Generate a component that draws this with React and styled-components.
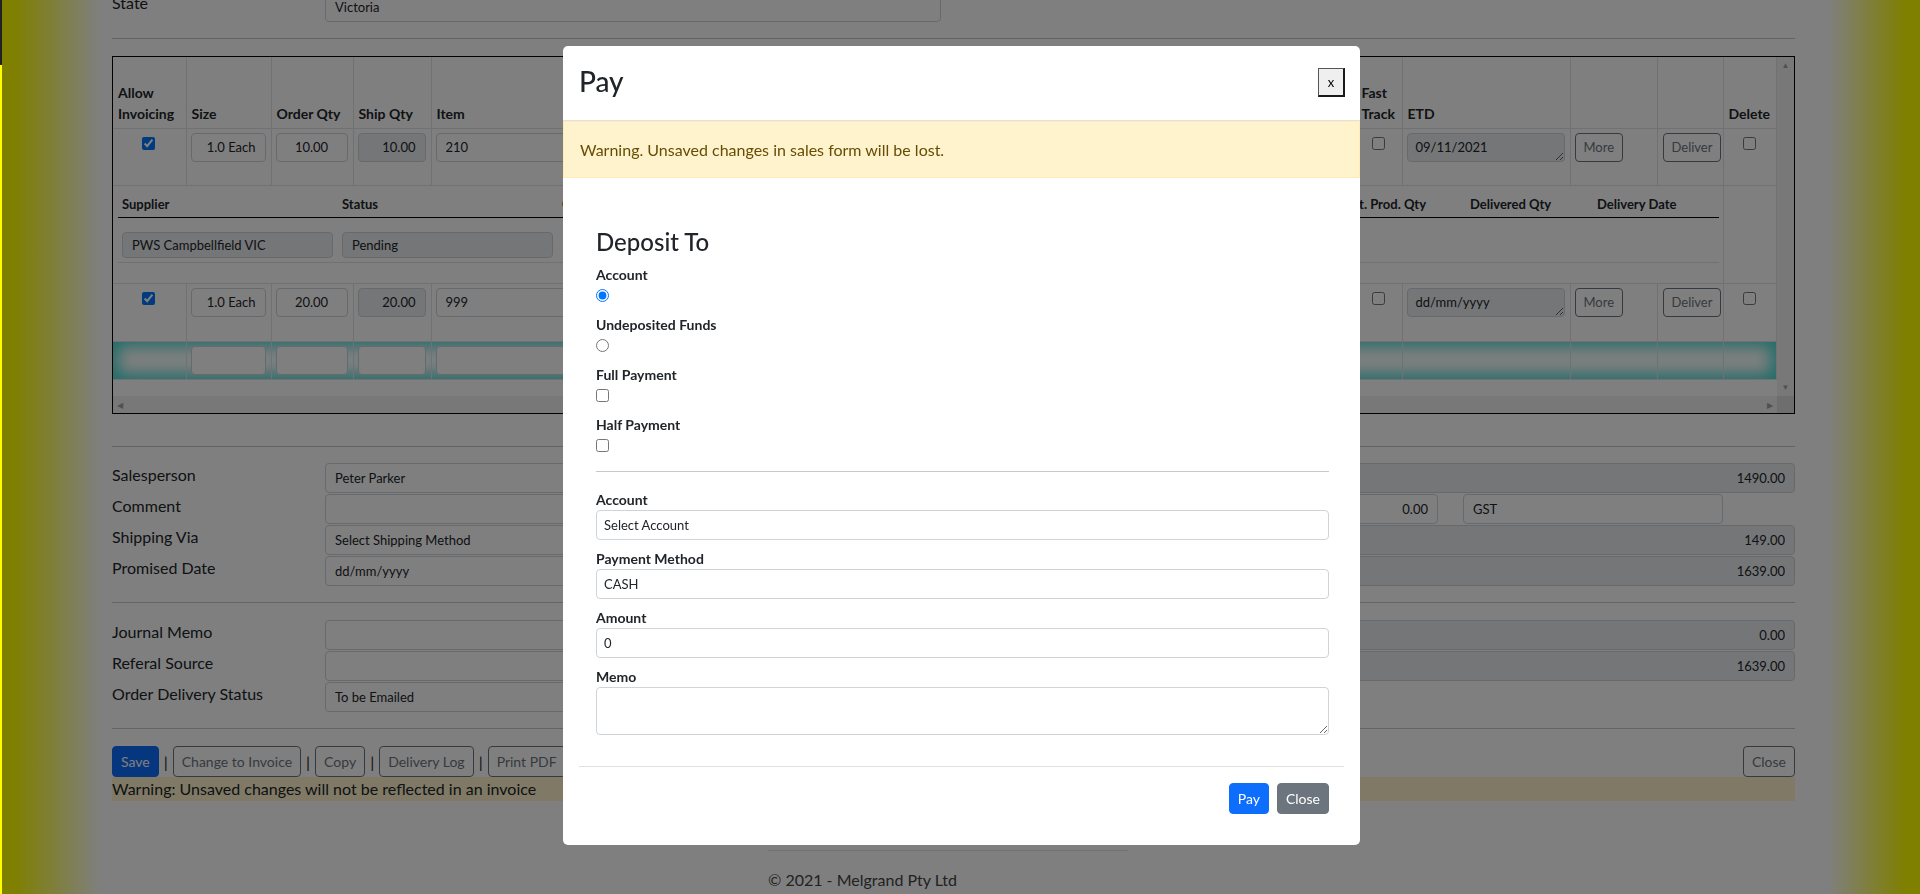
import React from 'react';
import styled, { createGlobalStyle } from 'styled-components';

const GlobalStyle = createGlobalStyle`
    html, body {
        margin: 0;
        height: 100%;
        overflow: hidden;
    }
    body {
        font-family: Lato, 'Liberation Sans', sans-serif;
        font-size: 16px;
        color: #212529;
        background: linear-gradient(90deg, #ffff00 0, #ffff00 14px, #fff 100px, #fff calc(100% - 92px), #ffff00 calc(100% - 14px), #ffff00 100%);
    }
    *, *::before, *::after {
        box-sizing: border-box;
    }
`;

const Page = styled.div`
    margin: 0 125px 0 112px;
`;

const TopRow = styled.div`
    display: grid;
    grid-template-columns: 829px 1fr;
    column-gap: 239px;
    align-items: start;
    margin-top: -9px;
`;

const FieldRow = styled.div`
    display: grid;
    grid-template-columns: ${p => p.$label || 213}px 1fr;
    align-items: center;
    height: ${p => p.$h || 30}px;
`;

const FieldLabel = styled.label`
    font-size: 16px;
    line-height: 24px;
    align-self: start;
`;

const Control = styled.input`
    display: block;
    width: 100%;
    height: ${p => p.$h || 30}px;
    margin-top: ${p => p.$shift || 0}px;
    padding: 0 9px;
    font: 13px Lato, 'Liberation Sans', sans-serif;
    color: #212529;
    text-align: ${p => p.$align || 'left'};
    background: ${p => (p.readOnly ? '#e9ecef' : '#fff')};
    border: 1px solid #ced4da;
    border-radius: 4px;
    outline: none;
`;

const Rule = styled.hr`
    border: 0;
    border-top: 1px solid rgba(33, 37, 41, 0.25);
    margin: ${p => p.$m};
`;

/* ---------- lines table ---------- */

const TableBox = styled.div`
    margin-top: 17px;
    border: 1px solid #000;
    display: grid;
    grid-template-columns: 1fr 17px;
    grid-template-rows: 339px 17px;
`;

const TableViewport = styled.div`
    overflow: hidden;
    background: #fff;
`;

const Lines = styled.table`
    border-collapse: collapse;
    table-layout: fixed;
    width: 1663px;
`;

const Row = styled.tr`
    height: ${p => p.$h}px;
    ${p => p.$glow && 'box-shadow: inset 0 0 16px 5px #3fd9d0;'}
`;

const Th = styled.th`
    border: 1px solid #dee2e6;
    border-top: 0;
    &:first-child { border-left: 0; }
    vertical-align: bottom;
    text-align: left;
    padding: 0 4px 4px 5px;
    font-size: 14px;
    font-weight: 700;
    line-height: 21px;
    white-space: nowrap;
`;

const Td = styled.td`
    border: 1px solid #dee2e6;
    &:first-child { border-left: 0; }
    vertical-align: top;
    text-align: ${p => p.$align || 'left'};
    padding: ${p => p.$pad || '4px 5px 4px 4px'};
`;

const Check = styled.input`
    width: 13px;
    height: 13px;
    margin: 4px 0 0;
`;

const DateBox = styled.textarea`
    display: block;
    width: 100%;
    height: 29px;
    padding: 4px 8px;
    font: 13px/19px Lato, 'Liberation Sans', sans-serif;
    color: #212529;
    background: #e9ecef;
    border: 1px solid #ced4da;
    border-radius: 4px;
    overflow: hidden;
    outline: none;
`;

const GhostButton = styled.button`
    height: ${p => p.$h || 29}px;
    padding: 0 8px;
    font: ${p => p.$size || 13}px Lato, 'Liberation Sans', sans-serif;
    color: #6c757d;
    background: transparent;
    border: 1px solid #6c757d;
    border-radius: 4px;
`;

const SubGrid = styled.div`
    display: grid;
    grid-template-columns: 220px 220px 388px 396px 124px 127px 126px;
`;

const SubHead = styled.div`
    padding: 0 4px 3px;
    font-size: 13px;
    font-weight: 700;
    line-height: 20px;
    white-space: nowrap;
    border-bottom: 1px solid #000;
`;

const SubCell = styled.div`
    padding: 14px 5px 4px 4px;
    border-bottom: 1px solid #dee2e6;
`;

const VScroll = styled.div`
    background: #f1f1f1;
    display: flex;
    flex-direction: column;
    justify-content: space-between;
    align-items: center;
    padding: 3px 0 4px;
`;

const HScroll = styled.div`
    background: #f1f1f1;
    display: flex;
    justify-content: space-between;
    align-items: center;
    padding: 0 4px;
`;

const Corner = styled.div`
    background: #dcdcdc;
`;

const Arrow = styled.span`
    font-size: 8px;
    line-height: 10px;
    color: #a3a3a3;
`;

/* ---------- summary ---------- */

const SummaryGrid = styled.div`
    display: grid;
    grid-template-columns: 829px 830px;
    column-gap: 24px;
`;

const Stack = styled.div`
    display: flex;
    flex-direction: column;
    gap: 1px;
`;

const Pair = styled.div`
    display: grid;
    grid-template-columns: 258px 260px;
    column-gap: 25px;
`;

const ActionBar = styled.div`
    display: flex;
    justify-content: space-between;
    align-items: center;
`;

const ButtonGroup = styled.div`
    display: flex;
    align-items: center;
    gap: 5px;
`;

const Pipe = styled.span`
    font-size: 16px;
    line-height: 24px;
`;

const SaveButton = styled.button`
    height: 31px;
    padding: 0 8px;
    font: 14px Lato, 'Liberation Sans', sans-serif;
    color: #fff;
    background: #0d6efd;
    border: 1px solid #0d6efd;
    border-radius: 4px;
`;

const UnsavedNote = styled.div`
    background: #fff3cd;
    font-size: 16px;
    line-height: 24px;
`;

const Footer = styled.footer`
    width: 360px;
    margin: 49px 0 0 656px;
    padding-top: 17px;
    border-top: 1px solid #dee2e6;
    font-size: 16px;
    line-height: 24px;
    color: #444;
`;

/* ---------- overlay / modal ---------- */

const Backdrop = styled.div`
    position: fixed;
    inset: 0;
    background: rgba(0, 0, 0, 0.5);
    z-index: 10;
`;

const EdgeStrip = styled.div`
    position: fixed;
    left: 0;
    top: 0;
    bottom: 0;
    width: 2px;
    background: linear-gradient(#222 0, #222 65px, #ffff00 65px);
    z-index: 30;
`;

const Modal = styled.div`
    position: fixed;
    left: 563px;
    top: 46px;
    width: 797px;
    background: #fff;
    border-radius: 5px;
    z-index: 20;
    overflow: hidden;
`;

const ModalHeader = styled.div`
    height: 75px;
    display: flex;
    justify-content: space-between;
    align-items: flex-start;
    padding: 19px 15px 0 16px;
    border-bottom: 1px solid #dee2e6;
`;

const ModalTitle = styled.h3`
    margin: 0;
    font-size: 28px;
    font-weight: 500;
    line-height: 1.2;
`;

const XButton = styled.button`
    width: 27px;
    height: 29px;
    margin-top: 3px;
    padding: 0;
    font: 13px Lato, 'Liberation Sans', sans-serif;
    color: #000;
    background: #efefef;
    border-style: solid;
    border-width: 1px 2px 2px 1px;
    border-color: #555 #1a1a1a #1a1a1a #555;
`;

const Alert = styled.div`
    height: 57px;
    display: flex;
    align-items: center;
    padding: 0 16px;
    background: #fff3cd;
    border: 1px solid #ffecb5;
    color: #664d03;
    font-size: 16px;
`;

const ModalBody = styled.div`
    padding: 16px 16px 0;
`;

const FormPanel = styled.div`
    padding: 0 15px 0 17px;
`;

const SectionTitle = styled.h4`
    margin: 34px 0 7.5px;
    font-size: 24px;
    font-weight: 500;
    line-height: 1.2;
`;

const Option = styled.div`
    height: 50px;
    display: flex;
    flex-direction: column;
    align-items: flex-start;
`;

const BoldLabel = styled.label`
    display: block;
    font-size: 14px;
    font-weight: 700;
    line-height: 21px;
    color: #212529;
`;

const Choice = styled.input`
    width: 13px;
    height: 13px;
    margin: 3.5px 0 0;
`;

const Field = styled.div`
    margin-bottom: ${p => p.$mb ?? 8}px;
`;

const ModalInput = styled.input`
    display: block;
    width: 100%;
    height: 30px;
    padding: 0 7px;
    font: 13px Lato, 'Liberation Sans', sans-serif;
    color: #212529;
    background: #fff;
    border: 1px solid #ced4da;
    border-radius: 4px;
    outline: none;
`;

const MemoBox = styled.textarea`
    display: block;
    width: 100%;
    height: 48px;
    padding: 4px 7px;
    font: 13px Lato, 'Liberation Sans', sans-serif;
    border: 1px solid #ced4da;
    border-radius: 4px;
    outline: none;
`;

const Divider = styled.div`
    margin-top: 31px;
    border-top: 1px solid #dee2e6;
`;

const ModalActions = styled.div`
    display: flex;
    justify-content: flex-end;
    gap: 8px;
    padding: 16px 15px 31px;
`;

const SolidButton = styled.button`
    height: 31px;
    padding: 0 8px;
    font: 14px Lato, 'Liberation Sans', sans-serif;
    color: #fff;
    background: ${p => p.$bg};
    border: 1px solid ${p => p.$bg};
    border-radius: 4px;
`;

const columns = [73, 85, 82, 78, 220, 400, 150, 155, 46, 168, 87, 66, 53];

const LineRow = ({ qty, etd }) => (
    <Row $h={qty === '10.00' ? 57 : 58}>
        <Td $align='center'><Check type='checkbox' defaultChecked /></Td>
        <Td><Control $h={29} $align='right' defaultValue='1.0 Each' /></Td>
        <Td><Control $h={29} $align='center' defaultValue={qty} /></Td>
        <Td><Control $h={29} $align='right' readOnly value={qty} /></Td>
        <Td><Control $h={29} defaultValue={qty === '10.00' ? '210' : '999'} /></Td>
        <Td><Control $h={29} /></Td>
        <Td><Control $h={29} $align='right' /></Td>
        <Td><Control $h={29} $align='right' readOnly /></Td>
        <Td $align='center'><Check type='checkbox' /></Td>
        <Td><DateBox readOnly value={etd} rows={1} /></Td>
        <Td><GhostButton>More</GhostButton></Td>
        <Td $pad='4px 4px 4px 5px'><GhostButton>Deliver</GhostButton></Td>
        <Td $align='center'><Check type='checkbox' /></Td>
    </Row>
);

const App = () => {
    const subHeads = ['Supplier', 'Status', 'Order No.', 'Supplier Invoice', 'Est. Prod. Qty', 'Delivered Qty', 'Delivery Date'];

    return (
        <>
            <GlobalStyle />
            <Page>
                <TopRow>
                    <FieldRow $h={31}>
                        <FieldLabel>State</FieldLabel>
                        <Control $h={31} defaultValue='Victoria' />
                    </FieldRow>
                    <Control $h={31} $shift={-22} />
                </TopRow>

                <Rule $m='16px 0 0' />

                <TableBox>
                    <TableViewport>
                        <Lines>
                            <colgroup>
                                {columns.map((w, i) => <col key={i} style={{ width: w }} />)}
                            </colgroup>
                            <thead>
                                <Row $h={71}>
                                    <Th>Allow<br />Invoicing</Th>
                                    <Th>Size</Th>
                                    <Th>Order Qty</Th>
                                    <Th>Ship Qty</Th>
                                    <Th>Item</Th>
                                    <Th>Description</Th>
                                    <Th>Unit Price</Th>
                                    <Th>Total</Th>
                                    <Th>Fast<br />Track</Th>
                                    <Th>ETD</Th>
                                    <Th />
                                    <Th />
                                    <Th>Delete</Th>
                                </Row>
                            </thead>
                            <tbody>
                                <LineRow qty='10.00' etd='09/11/2021' />
                                <Row $h={98}>
                                    <Td colSpan={12} $pad='8px 5px 0'>
                                        <SubGrid>
                                            {subHeads.map(h => <SubHead key={h}>{h}</SubHead>)}
                                            <SubCell><Control $h={26} readOnly value='PWS Campbellfield VIC' /></SubCell>
                                            <SubCell><Control $h={26} readOnly value='Pending' /></SubCell>
                                            <SubCell />
                                            <SubCell />
                                            <SubCell />
                                            <SubCell />
                                            <SubCell />
                                        </SubGrid>
                                    </Td>
                                    <Td />
                                </Row>
                                <LineRow qty='20.00' etd='dd/mm/yyyy' />
                                <Row $h={38} $glow>
                                    <Td />
                                    {[1, 2, 3, 4, 5, 6, 7].map(i => (
                                        <Td key={i}><Control $h={29} /></Td>
                                    ))}
                                    <Td />
                                    <Td />
                                    <Td />
                                    <Td />
                                    <Td />
                                </Row>
                            </tbody>
                        </Lines>
                    </TableViewport>
                    <VScroll>
                        <Arrow>▲</Arrow>
                        <Arrow>▼</Arrow>
                    </VScroll>
                    <HScroll>
                        <Arrow>◀</Arrow>
                        <Arrow>▶</Arrow>
                    </HScroll>
                    <Corner />
                </TableBox>

                <Rule $m='32px 0 16px' />

                <SummaryGrid>
                    <Stack>
                        <FieldRow>
                            <FieldLabel>Salesperson</FieldLabel>
                            <Control defaultValue='Peter Parker' />
                        </FieldRow>
                        <FieldRow>
                            <FieldLabel>Comment</FieldLabel>
                            <Control />
                        </FieldRow>
                        <FieldRow>
                            <FieldLabel>Shipping Via</FieldLabel>
                            <Control defaultValue='Select Shipping Method' />
                        </FieldRow>
                        <FieldRow>
                            <FieldLabel>Promised Date</FieldLabel>
                            <Control defaultValue='dd/mm/yyyy' />
                        </FieldRow>
                    </Stack>
                    <Stack>
                        <FieldRow $label={215}>
                            <FieldLabel>Subtotal</FieldLabel>
                            <Control $align='right' readOnly value='1490.00' />
                        </FieldRow>
                        <FieldRow $label={215}>
                            <FieldLabel>Tax</FieldLabel>
                            <Pair>
                                <Control $align='right' defaultValue='0.00' />
                                <Control defaultValue='GST' />
                            </Pair>
                        </FieldRow>
                        <FieldRow $label={215}>
                            <FieldLabel>Tax Amount</FieldLabel>
                            <Control $align='right' readOnly value='149.00' />
                        </FieldRow>
                        <FieldRow $label={215}>
                            <FieldLabel>Total</FieldLabel>
                            <Control $align='right' readOnly value='1639.00' />
                        </FieldRow>
                    </Stack>
                </SummaryGrid>

                <Rule $m='16px 0 17px' />

                <SummaryGrid>
                    <Stack>
                        <FieldRow>
                            <FieldLabel>Journal Memo</FieldLabel>
                            <Control />
                        </FieldRow>
                        <FieldRow>
                            <FieldLabel>Referal Source</FieldLabel>
                            <Control />
                        </FieldRow>
                        <FieldRow>
                            <FieldLabel>Order Delivery Status</FieldLabel>
                            <Control defaultValue='To be Emailed' />
                        </FieldRow>
                    </Stack>
                    <Stack>
                        <FieldRow $label={215}>
                            <FieldLabel>Paid</FieldLabel>
                            <Control $align='right' readOnly value='0.00' />
                        </FieldRow>
                        <FieldRow $label={215}>
                            <FieldLabel>Balance Due</FieldLabel>
                            <Control $align='right' readOnly value='1639.00' />
                        </FieldRow>
                    </Stack>
                </SummaryGrid>

                <Rule $m='16px 0 17px' />

                <ActionBar>
                    <ButtonGroup>
                        <SaveButton>Save</SaveButton>
                        <Pipe>|</Pipe>
                        <GhostButton $h={31} $size={14}>Change to Invoice</GhostButton>
                        <Pipe>|</Pipe>
                        <GhostButton $h={31} $size={14}>Copy</GhostButton>
                        <Pipe>|</Pipe>
                        <GhostButton $h={31} $size={14}>Delivery Log</GhostButton>
                        <Pipe>|</Pipe>
                        <GhostButton $h={31} $size={14}>Print PDF</GhostButton>
                    </ButtonGroup>
                    <GhostButton $h={31} $size={14}>Close</GhostButton>
                </ActionBar>
                <UnsavedNote>Warning: Unsaved changes will not be reflected in an invoice</UnsavedNote>

                <Footer>© 2021 - Melgrand Pty Ltd</Footer>
            </Page>

            <Backdrop />
            <EdgeStrip />

            <Modal>
                <ModalHeader>
                    <ModalTitle>Pay</ModalTitle>
                    <XButton>x</XButton>
                </ModalHeader>
                <Alert>Warning. Unsaved changes in sales form will be lost.</Alert>
                <ModalBody>
                    <FormPanel>
                        <SectionTitle>Deposit To</SectionTitle>
                        <Option>
                            <BoldLabel>Account</BoldLabel>
                            <Choice type='radio' name='deposit' defaultChecked />
                        </Option>
                        <Option>
                            <BoldLabel>Undeposited Funds</BoldLabel>
                            <Choice type='radio' name='deposit' />
                        </Option>
                        <Option>
                            <BoldLabel>Full Payment</BoldLabel>
                            <Choice type='checkbox' />
                        </Option>
                        <Option>
                            <BoldLabel>Half Payment</BoldLabel>
                            <Choice type='checkbox' />
                        </Option>
                        <Rule $m='7px 0 17px' />
                        <Field>
                            <BoldLabel>Account</BoldLabel>
                            <ModalInput defaultValue='Select Account' />
                        </Field>
                        <Field>
                            <BoldLabel>Payment Method</BoldLabel>
                            <ModalInput defaultValue='CASH' />
                        </Field>
                        <Field>
                            <BoldLabel>Amount</BoldLabel>
                            <ModalInput defaultValue='0' />
                        </Field>
                        <Field $mb={0}>
                            <BoldLabel>Memo</BoldLabel>
                            <MemoBox />
                        </Field>
                    </FormPanel>
                    <Divider />
                    <ModalActions>
                        <SolidButton $bg='#0d6efd'>Pay</SolidButton>
                        <SolidButton $bg='#6c757d'>Close</SolidButton>
                    </ModalActions>
                </ModalBody>
            </Modal>
        </>
    );
};

export default App;
